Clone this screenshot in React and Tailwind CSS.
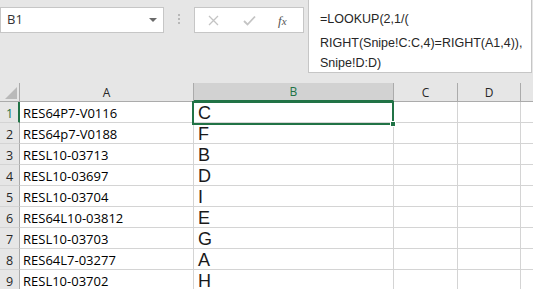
import React from 'react';

const rows = [
  ['RES64P7-V0116', 'C'],
  ['RES64p7-V0188', 'F'],
  ['RESL10-03713', 'B'],
  ['RESL10-03697', 'D'],
  ['RESL10-03704', 'I'],
  ['RES64L10-03812', 'E'],
  ['RESL10-03703', 'G'],
  ['RES64L7-03277', 'A'],
  ['RESL10-03702', 'H'],
];

const cell = "h-[21px] shrink-0 border-r border-b border-[#d4d4d4] bg-white flex items-end";

export default function App() {
  return (
    <div className="w-[533px] h-[289px] bg-[#e6e6e6] overflow-hidden relative font-['Open_Sans',sans-serif] text-[#262626]">
      {/* Formula bar */}
      <div className="flex h-[83px] items-start">
        <div className="mt-[7px] w-[164px] h-[26px] bg-white border border-[#c6c6c6] flex items-center justify-between pl-[6px] pr-[6px]">
          <span className="text-[13px] text-[#333]">B1</span>
          <span className="w-0 h-0 border-l-[4px] border-r-[4px] border-t-[4px] border-l-transparent border-r-transparent border-t-[#6a6a6a]" />
        </div>
        <div className="mt-[14px] w-[30px] flex flex-col items-center gap-[2px]">
          <span className="w-[2px] h-[2px] bg-[#b8b8b8]" />
          <span className="w-[2px] h-[2px] bg-[#b8b8b8]" />
          <span className="w-[2px] h-[2px] bg-[#b8b8b8]" />
        </div>
        <div className="mt-[7px] w-[110px] h-[26px] bg-white border border-[#c6c6c6] flex items-center">
          <svg width="11" height="11" viewBox="0 0 11 11" className="ml-[13px]">
            <path d="M1 1L10 10M10 1L1 10" stroke="#c4c4c4" strokeWidth="1.3" />
          </svg>
          <svg width="13" height="11" viewBox="0 0 13 11" className="ml-[24px]">
            <path d="M1 6L4.5 9.5L12 1.5" stroke="#c4c4c4" strokeWidth="1.8" fill="none" />
          </svg>
          <span className="ml-[22px] text-[13px] italic text-[#555] font-['Liberation_Serif',serif] leading-none">f<span className="text-[11px]">x</span></span>
        </div>
        <div className="ml-[4px] -mt-[1px] w-[224px] h-[74px] bg-white border border-[#c6c6c6] pl-[11px] font-['Liberation_Sans',sans-serif] text-[12.5px] text-[#262626] flex flex-col">
          <div className="mt-[9px] h-[20px] leading-[20px] whitespace-nowrap">=LOOKUP(2,1/(</div>
          <div className="mt-[4px] h-[20px] leading-[20px] whitespace-nowrap">RIGHT(Snipe!C:C,4)=RIGHT(A1,4)),</div>
          <div className="h-[20px] leading-[20px] whitespace-nowrap">Snipe!D:D)</div>
        </div>
      </div>

      {/* Column headers */}
      <div className="flex h-[19px] border-b border-[#ababab] text-[12px]">
        <div className="w-[20px] shrink-0 border-r border-[#ababab] relative">
          <svg width="12" height="12" viewBox="0 0 12 12" className="absolute right-[2px] bottom-[2px]">
            <path d="M12 0L12 12L0 12Z" fill="#b9b9b9" />
          </svg>
        </div>
        <div className="w-[174px] shrink-0 border-r border-[#ababab] flex items-end justify-center pb-[1px] leading-[14px]">A</div>
        <div className="w-[200px] shrink-0 border-r border-[#ababab] bg-[#d2d2d2] border-b-2 border-b-[#217346] -mb-[1px] flex items-end justify-center pb-[1px] leading-[14px] text-[#217346]">B</div>
        <div className="w-[64px] shrink-0 border-r border-[#ababab] flex items-end justify-center pb-[1px] leading-[14px]">C</div>
        <div className="w-[63px] shrink-0 border-r border-[#ababab] flex items-end justify-center pb-[1px] leading-[14px]">D</div>
        <div className="flex-1" />
      </div>

      {/* Rows */}
      {rows.map(([a, b], i) => (
        <div key={i} className="flex">
          <div className={`w-[20px] h-[21px] shrink-0 border-b border-r flex items-end justify-center pb-[2px] text-[12.5px] leading-[13px] ${i === 0 ? 'border-r-2 border-r-[#217346] border-b-[#d4d4d4] text-[#217346] pl-[1px]' : 'border-r-[#ababab] border-b-[#d4d4d4]'}`}>
            {i + 1}
          </div>
          <div className={`${cell} w-[174px] pl-[3px] pb-[2px] text-[13px] leading-[13px] text-black`}>{a}</div>
          <div className={`${cell} w-[200px] pl-[4px] font-['Liberation_Sans',sans-serif] text-[18px] leading-[18px] text-[#1a1a1a]`}>{b}</div>
          <div className={`${cell} w-[64px]`} />
          <div className={`${cell} w-[63px]`} />
          <div className={`${cell} flex-1 border-r-0`} />
        </div>
      ))}

      {/* Selection */}
      <div className="absolute left-[192px] top-[101px] w-[202px] h-[24px] border-2 border-[#217346] pointer-events-none" />
      <div className="absolute left-[390px] top-[121px] w-[6px] h-[6px] bg-[#217346] border border-white" />
    </div>
  );
}
